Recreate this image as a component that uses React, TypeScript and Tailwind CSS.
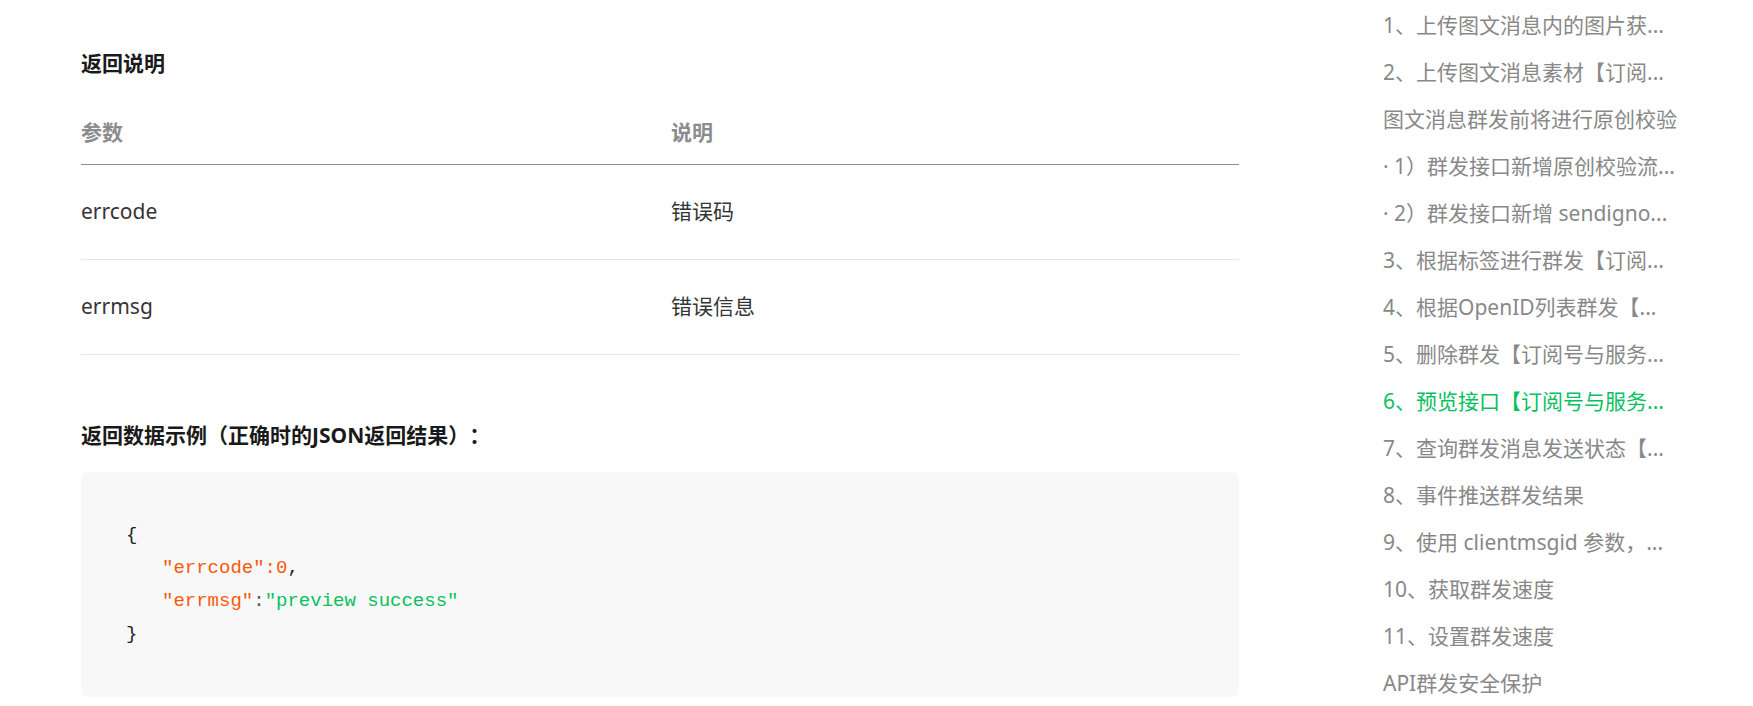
const tocItems = [
  { label: "1、上传图文消息内的图片获...", active: false },
  { label: "2、上传图文消息素材【订阅...", active: false },
  { label: "图文消息群发前将进行原创校验", active: false },
  { label: "· 1）群发接口新增原创校验流...", active: false },
  { label: "· 2）群发接口新增 sendigno...", active: false },
  { label: "3、根据标签进行群发【订阅...", active: false },
  { label: "4、根据OpenID列表群发【...", active: false },
  { label: "5、删除群发【订阅号与服务...", active: false },
  { label: "6、预览接口【订阅号与服务...", active: true },
  { label: "7、查询群发消息发送状态【...", active: false },
  { label: "8、事件推送群发结果", active: false },
  { label: "9、使用 clientmsgid 参数，...", active: false },
  { label: "10、获取群发速度", active: false },
  { label: "11、设置群发速度", active: false },
  { label: "API群发安全保护", active: false },
];

const rows = [
  { name: "errcode", desc: "错误码" },
  { name: "errmsg", desc: "错误信息" },
];

const sans = "font-['Noto_Sans','Noto_Sans_CJK_SC',sans-serif]";

export default function App() {
  return (
    <div className={`flex min-h-[706px] bg-white [text-spacing-trim:space-all] ${sans}`}>
      <main className="ml-[81px] w-[1158px] shrink-0 pt-[47px]">
        <h3 className="text-[21px] font-bold leading-[32px] text-[#1a1a1a]">返回说明</h3>

        <div className="mt-[23px]">
          <div className="flex h-[63px] items-center border-b border-[#8f8f8f] pb-[1px]">
            <span className="w-[590px] text-[21px] font-bold text-[#8c8c8c]">参数</span>
            <span className="text-[21px] font-bold text-[#8c8c8c]">说明</span>
          </div>
          {rows.map((r) => (
            <div
              key={r.name}
              className="flex h-[95px] items-center border-b border-[#e7e7e7] text-[21px] text-[#353535]"
            >
              <span className="w-[590px]">{r.name}</span>
              <span>{r.desc}</span>
            </div>
          ))}
        </div>

        <h3 className="mt-[64px] text-[21px] font-bold leading-[32px] text-[#1a1a1a]">
          返回数据示例（正确时的JSON返回结果）：
        </h3>

        <pre className="mt-[21px] h-[225px] rounded-md bg-[#f8f8f8] pl-[45px] pt-[47px] font-['Liberation_Mono',monospace] text-[19px] leading-[33px] text-[#222]">
          <div>{"{"}</div>
          <div className="pl-[36px]">
            <span className="text-[#fa5a0a]">"errcode":0</span>
            <span>,</span>
          </div>
          <div className="pl-[36px]">
            <span className="text-[#fa5a0a]">"errmsg"</span>
            <span className="text-[#555]">:</span>
            <span className="text-[#07c160]">"preview success"</span>
          </div>
          <div>{"}"}</div>
        </pre>
      </main>

      <nav className="ml-[144px] w-[300px] shrink-0 pt-[2px]">
        {tocItems.map((t) => (
          <div
            key={t.label}
            className={
              "h-[47px] whitespace-nowrap text-[21px] leading-[47px] " +
              (t.active ? "text-[#07c160]" : "text-[#888]")
            }
          >
            {t.label}
          </div>
        ))}
      </nav>
    </div>
  );
}
